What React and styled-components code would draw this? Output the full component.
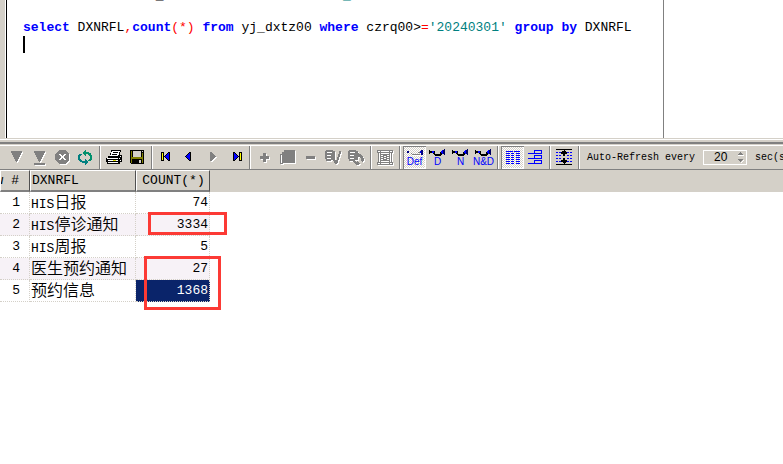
import React from 'react'
import styled, { createGlobalStyle, css } from 'styled-components'

const colors = {
	face: '#d4d0c8',
	shadow: '#808080',
	light: '#ffffff',
	keyword: '#0000ff',
	symbol: '#ff0000',
	string: '#008080',
	selected: '#0a246a',
	altRow: '#f7f2f7',
	mark: '#fc3a35',
}

const rows = [
	{ latin: 'HIS', name: '日报', count: 74 },
	{ latin: 'HIS', name: '停诊通知', count: 3334 },
	{ latin: 'HIS', name: '周报', count: 5 },
	{ latin: '', name: '医生预约通知', count: 27 },
	{ latin: '', name: '预约信息', count: 1368, selected: true },
]

// disabled icons are embossed: a white copy sits one pixel down and right
const Embossed = ({ children }) => (
	<>
		<g transform='translate(1 1)' fill='#fff'>
			{children}
		</g>
		<g fill='#808080'>{children}</g>
	</>
)

const Database = () => (
	<path
		fillRule='evenodd'
		d='M4 4h7v1h2v9H9v1H4v-2H3V5h1zM5 6v1h5V6zM5 9v1h4V9zM5 12v1h4v-1z'
	/>
)

const icons = {
	fetchNext: (
		<Embossed>
			<path d='M6 5h11v2h-1v2h-1v2h-1v2h-1v2h-1v1h-1v-1h-1v-2H9v-2H8V9H7V7H6z' />
		</Embossed>
	),
	fetchAll: (
		<Embossed>
			<path d='M6 5h11v2h-1v2h-1v2h-1v2h-1v2h-1v1h-1v-1h-1v-2H9v-2H8V9H7V7H6zM6 17h11v2H6z' />
		</Embossed>
	),
	cancel: (
		<>
			<path d='M9 5h6l4 4v6l-4 4H9l-4-4V9z' fill='#fff' />
			<path d='M8 4h6l4 4v6l-4 4H8l-4-4V8z' fill='#808080' />
			<path d='M8 8h2v1h1v1h1V9h1V8h2v1h-1v1h-1v2h1v1h1v1h-2v-1h-1v-1h-1v1h-1v1H8v-1h1v-1h1v-2H9V9H8z' fill='#fff' />
		</>
	),
	refresh: (
		<>
			<path d='M11 4h1v2h3v1h2v2h1v5h-1v1h-3v-1h1v-1h1v-3h-1V9h-1V8h-2v2h-1V9h-1V8H9V6h1V5h1z' fill='#00906c' />
			<path d='M12 19h-1v-2H8v-1H6v-1H5v-1H4V9h1V8h3v1H7v1H6v3h1v1h1v1h3v-2h1v1h1v1h1v2h-1v1h-1z' fill='#008080' />
		</>
	),
	print: (
		<>
			<path d='M8 4h10v2h-1v3h2v7h-2v2H4v-2H3v-4h2v-2h2V7h1z' fill='#000' />
			<path d='M9 5h8l-2 5H7z' fill='#fff' />
			<path d='M10 6h5v1h-5zM9 8h5v1H9z' fill='#000' />
			<path d='M4 12h11v1H4zM5 14h10v1H5zM5 16h10v1H5zM17 10h1v1h-1zM16 12h1v1h-1zM17 14h1v1h-1z' fill='#fff' />
			<path d='M10 14h3v1h-3z' fill='#e0e000' />
		</>
	),
	save: (
		<>
			<path d='M4 4h14v14H5v-1H4z' fill='#000' />
			<path d='M5 5h1v6h1v1h8v-1h1V7h1v10h-1v-5H6v5H5zM6 11h10v2H6z' fill='#808000' />
			<path d='M7 5h8v6H7zM16 5h1v1h-1zM13 14h2v3h-2z' fill='#d4d0c8' />
		</>
	),
	first: (
		<>
			<path d='M6 6h3v9H6zM9 10h1V9h1V8h1V7h1V6h2v9h-2v-1h-1v-1h-1v-1h-1v-1H9z' fill='#000' />
			<path d='M7 7h1v7H7z' fill='#ff0' />
			<path d='M10 10h1V9h1V8h1V7h1v7h-1v-1h-1v-1h-1v-1h-1z' fill='#00f' />
		</>
	),
	previous: (
		<>
			<path d='M7 10h1V9h1V8h1V7h1V6h2v9h-2v-1h-1v-1H9v-1H8v-1H7z' fill='#000' />
			<path d='M8 10h1V9h1V8h1V7h1v7h-1v-1h-1v-1H9v-1H8z' fill='#00f' />
		</>
	),
	next: (
		<Embossed>
			<path d='M9 6h2v1h1v1h1v1h1v1h1v1h-1v1h-1v1h-1v1h-1v1H9z' />
		</Embossed>
	),
	last: (
		<>
			<path d='M15 6h3v9h-3zM9 6h2v1h1v1h1v1h1v1h1v1h-1v1h-1v1h-1v1h-1v1H9z' fill='#000' />
			<path d='M16 7h1v7h-1z' fill='#ff0' />
			<path d='M10 7h1v1h1v1h1v1h1v1h-1v1h-1v1h-1v1h-1z' fill='#00f' />
		</>
	),
	insert: (
		<Embossed>
			<path d='M10 7h3v3h3v3h-3v3h-3v-3H7v-3h3z' />
		</Embossed>
	),
	copy: (
		<Embossed>
			<path fillRule='evenodd' d='M8 4h11v13H7v1H4V8h2V6h2zM5 9v8h1V9z' />
		</Embossed>
	),
	remove: (
		<Embossed>
			<path d='M7 10h9v3H7z' />
		</Embossed>
	),
	post: (
		<Embossed>
			<Database />
			<path d='M17 5h2v3h-1v3h-1v3h-1v3h-1v1h-2v-1h-1v-2h-1v-3h2v2h2v-3h1V8h1z' />
		</Embossed>
	),
	revert: (
		<Embossed>
			<Database />
			<path d='M12 7h2v1h2v1h1v1h1v2h1v3h-1v1h-1v-1h-1v-3h-1v-1h-2v2h-1v-1h-1v-1h-1V9h1V8h1zM8 13h2v2h1v1h1v-1h1v1h1v1h1v1h-1v1h-3v-1h-1v-1H9v-1H8z' />
		</Embossed>
	),
	clear: (
		<Embossed>
			<path
				fillRule='evenodd'
				d='M3 4h16v3h-1v9h1v3H3v-3h1V7H3zM4 5v1h2V5zM7 5v1h8V5zM16 5v1h2V5zM5 7v9h1V7zM16 7v9h1V7zM7 7v1h8V7zM7 9v1h2V9zM13 9v1h2V9zM10 10v1h2v-1zM7 11v1h2v-1zM13 11v1h2v-1zM10 12v1h2v-1zM7 13v1h2v-1zM13 13v1h2v-1zM7 15v1h8v-1zM4 17v1h2v-1zM7 17v1h8v-1zM16 17v1h2v-1z'
			/>
		</Embossed>
	),
	linkDefault: (
		<>
			<path d='M9 8h8v1H9zM8 7h1v1H8zM15 6h2v1h-2z' fill='#808080' />
			<path d='M9 9h8v1H9z' fill='#fff' />
			<path d='M4 5h2v2H4zM17 5h1V4h2v5h-2V7h-1z' fill='#000080' />
			<path d='M17 5h1v2h-1z' fill='#00f' />
		</>
	),
	link: (
		<>
			<path d='M3 4h1v1h2v2H4v1H3zM7 5h2v3h5V6h2v3h-1v1H9V9H8V8H7z' fill='#000' />
			<path d='M6 5h2v2H6zM15 5h1V4h1v4h-1V7h-1z' fill='#00f' />
			<path d='M17 4h1V3h1v6h-1V8h-1z' fill='#000060' />
		</>
	),
	gridView: (
		<path
			d='M5 5h7v1H5zM13 5h6v1h-6zM5 7h4v1H5zM10 7h3v1h-3zM15 7h4v1h-4zM5 9h4v1H5zM10 9h3v1h-3zM15 9h4v1h-4zM5 11h4v1H5zM10 11h3v1h-3zM15 11h4v1h-4zM5 13h4v1H5zM10 13h3v1h-3zM15 13h4v1h-4zM5 15h4v1H5zM10 15h3v1h-3zM15 15h4v1h-4zM5 17h4v1H5zM10 17h3v1h-3zM15 17h4v1h-4z'
			fill='#00f'
		/>
	),
	formView: (
		<path
			fillRule='evenodd'
			d='M10 4h8v4h-8zM11 5v2h6V5zM10 9h8v4h-8zM11 10v2h6v-2zM10 14h8v4h-8zM11 15v2h6v-2zM4 7h6v1H4zM4 12h6v1H4zM4 17h6v1H4z'
			fill='#00f'
		/>
	),
	rowHeight: (
		<>
			<path d='M3 3h16v1H3zM3 18h16v1H3z' fill='#000' />
			<path
				d='M3 6h2v1H3zM6 6h2v1H6zM14 6h2v1h-2zM17 6h2v1h-2zM3 9h2v1H3zM6 9h2v1H6zM14 9h2v1h-2zM17 9h2v1h-2zM3 12h2v1H3zM6 12h2v1H6zM14 12h2v1h-2zM17 12h2v1h-2zM3 15h2v1H3zM6 15h2v1H6zM14 15h2v1h-2zM17 15h2v1h-2z'
				fill='#00f'
			/>
			<path d='M11 4h1v1h1v1h1v2h-2v2h-2V8H8V6h1V5h2zM10 12h2v2h2v2h-1v1h-1v1h-1v-1h-1v-1H8v-2h2z' fill='#000' />
		</>
	),
}

const groups = [
	[
		{ icon: 'fetchNext', label: 'Fetch next rows', disabled: true },
		{ icon: 'fetchAll', label: 'Fetch all rows', disabled: true },
		{ icon: 'cancel', label: 'Cancel query', disabled: true },
		{ icon: 'refresh', label: 'Refresh' },
	],
	[
		{ icon: 'print', label: 'Print' },
		{ icon: 'save', label: 'Save' },
	],
	[
		{ icon: 'first', label: 'First record' },
		{ icon: 'previous', label: 'Previous record' },
		{ icon: 'next', label: 'Next record', disabled: true },
		{ icon: 'last', label: 'Last record' },
	],
	[
		{ icon: 'insert', label: 'Insert record', disabled: true },
		{ icon: 'copy', label: 'Copy record', disabled: true },
		{ icon: 'remove', label: 'Delete record', disabled: true },
		{ icon: 'post', label: 'Post edit', disabled: true },
		{ icon: 'revert', label: 'Revert edit', disabled: true },
	],
	[{ icon: 'clear', label: 'Clear grid', disabled: true }],
	[
		{ icon: 'linkDefault', text: 'Def', pressed: true },
		{ icon: 'link', text: 'D' },
		{ icon: 'link', text: 'N' },
		{ icon: 'link', text: 'N&D' },
	],
	[
		{ icon: 'gridView', label: 'Grid view', pressed: true },
		{ icon: 'formView', label: 'Form view' },
	],
	[{ icon: 'rowHeight', label: 'Row height' }],
]

const Tool = ({ icon, label, text, pressed, disabled }) => (
	<ToolButton type='button' aria-label={label} aria-pressed={pressed} disabled={disabled} $pressed={pressed}>
		<ToolIcon viewBox='0 0 23 23' aria-hidden='true'>
			{icons[icon]}
		</ToolIcon>
		{text && <ToolText>{text}</ToolText>}
	</ToolButton>
)

const Editor = () => (
	<EditorPane>
		<Gutter />
		<Code>
			<ScrolledLine>
				{' '.repeat(17)}_{' '.repeat(23)}
				<Str>_</Str>
			</ScrolledLine>
			<Keyword>select</Keyword> DXNRFL<Sym>,</Sym>
			<Keyword>count</Keyword>
			<Sym>(*)</Sym> <Keyword>from</Keyword> yj_dxtz00 <Keyword>where</Keyword> czrq00&gt;<Sym>=</Sym>
			<Str>'20240301'</Str> <Keyword>group by</Keyword> DXNRFL{'\n'}
			<Caret />
		</Code>
	</EditorPane>
)

const Toolbar = () => (
	<ToolbarRow>
		{groups.map((group, i) => (
			<React.Fragment key={i}>
				{group.map((tool) => (
					<Tool key={tool.label || tool.text} {...tool} />
				))}
				<Separator />
			</React.Fragment>
		))}
		<Refresh>
			<label htmlFor='refresh'>Auto-Refresh every</label>
			<Spin>
				<input id='refresh' type='text' inputMode='numeric' defaultValue='20' />
				<SpinButtons>
					<button type='button' aria-label='Increase'>
						<svg viewBox='0 0 7 4' shapeRendering='crispEdges'>
							<path d='M3 0h1v1h1v1h1v1H1V2h1V1h1z' fill='#808080' />
							<path d='M1 3h6v1H1z' fill='#fff' />
						</svg>
					</button>
					<button type='button' aria-label='Decrease'>
						<svg viewBox='0 0 7 4' shapeRendering='crispEdges'>
							<path d='M6 1h1v1H6v1H5v1H4V3h1V2h1z' fill='#fff' />
							<path d='M1 0h5v1H5v1H4v1H3V2H2V1H1z' fill='#808080' />
						</svg>
					</button>
				</SpinButtons>
			</Spin>
			<span>sec(s)</span>
		</Refresh>
	</ToolbarRow>
)

const Results = () => (
	<GridArea>
		<Grid>
			<colgroup>
				<col width='30' />
				<col width='106' />
				<col width='74' />
				<col />
			</colgroup>
			<thead>
				<tr>
					<HeadCell>
						<RowHead>w #</RowHead>
					</HeadCell>
					<HeadCell>DXNRFL</HeadCell>
					<HeadCell $center>COUNT(*)</HeadCell>
					<HeadFill />
				</tr>
			</thead>
			<tbody>
				{rows.map((row, i) => (
					<Row key={row.latin + row.name}>
						<NumberCell $wide>{i + 1}</NumberCell>
						<Cell>
							{row.latin}
							<Han>{row.name}</Han>
						</Cell>
						<NumberCell $selected={row.selected}>{row.count}</NumberCell>
						<td />
					</Row>
				))}
			</tbody>
		</Grid>
		<Mark $left={148} $top={42} $width={79} $height={23} />
		<Mark $left={144} $top={86} $width={77} $height={54} />
	</GridArea>
)

const App = () => (
	<Page>
		<GlobalStyle />
		<Editor />
		<Splitter />
		<Toolbar />
		<Results />
	</Page>
)

const mono = "'Liberation Mono', 'Noto Sans CJK SC', monospace"

const GlobalStyle = createGlobalStyle`
	* {
		box-sizing: border-box;
	}

	body {
		margin: 0;
		background: ${colors.light};
		color: #000;
		font: 13px/17px ${mono};
	}

	button,
	input {
		margin: 0;
		padding: 0;
		border: none;
		border-radius: 0;
		background: none;
	}
`

const Page = styled.div`
	display: flex;
	flex-direction: column;
	min-height: 100vh;
	overflow: hidden;
`

const EditorPane = styled.div`
	display: flex;
	min-height: 138px;
	overflow: hidden;
`

const Gutter = styled.div`
	flex: none;
	width: 7px;
	border-right: 1px solid #000;
	background: linear-gradient(to right, ${colors.face} 5px, ${colors.light} 5px);
`

const Code = styled.pre`
	margin: 0;
	padding-left: 16px;
	flex: 0 0 657px;
	border-right: 1px solid ${colors.shadow};
	font: inherit;
`

const ScrolledLine = styled.span`
	display: block;
	margin: -13px 0 15px;
`

const Keyword = styled.span`
	color: ${colors.keyword};
	font-weight: bold;
`

const Sym = styled.span`
	color: ${colors.symbol};
`

const Str = styled.span`
	color: ${colors.string};
`

const Caret = styled.span`
	display: inline-block;
	width: 2px;
	height: 17px;
	background: #000;
	vertical-align: top;
`

const Splitter = styled.div`
	height: 8px;
	border-top: 1px solid ${colors.face};
	background: linear-gradient(
		${colors.light} 1px,
		${colors.face} 1px 3px,
		${colors.shadow} 3px 5px,
		${colors.face} 5px 6px,
		${colors.light} 6px
	);
`

const ToolbarRow = styled.div`
	display: flex;
	align-items: stretch;
	height: 24px;
	padding-left: 5px;
	border-bottom: 1px solid ${colors.shadow};
	background: ${colors.face};
	overflow: hidden;
`

const ToolButton = styled.button`
	position: relative;
	flex: none;
	width: 23px;
	height: 23px;

	${({ $pressed }) =>
		$pressed &&
		css`
			background: repeating-conic-gradient(${colors.face} 0 25%, ${colors.light} 0 50%) 0 0 / 2px 2px;
			box-shadow: inset 1px 1px ${colors.shadow}, inset -1px -1px ${colors.light};
		`}
`

const ToolIcon = styled.svg`
	display: block;
	width: 23px;
	height: 23px;
	shape-rendering: crispEdges;
`

const ToolText = styled.span`
	position: absolute;
	inset: auto 0 1px;
	display: flex;
	justify-content: center;
	color: ${colors.keyword};
	font: 10px/12px 'Liberation Sans', sans-serif;
`

const Separator = styled.div`
	flex: none;
	width: 2px;
	margin: 0 2px;
	border-left: 1px solid ${colors.shadow};
	border-right: 1px solid ${colors.light};
`

const Refresh = styled.div`
	display: flex;
	flex: none;
	align-items: center;
	gap: 8px;
	padding-left: 5px;
	font-size: 10px;
	white-space: nowrap;
`

const Spin = styled.div`
	display: flex;
	width: 44px;
	height: 15px;
	border: 1px solid ${colors.light};

	input {
		width: 33px;
		padding-left: 10px;
		font: 12px/13px 'Liberation Sans', sans-serif;
	}
`

const SpinButtons = styled.div`
	display: flex;
	flex-direction: column;
	justify-content: space-between;
	padding: 1px 0;

	button,
	svg {
		display: block;
		width: 7px;
		height: 4px;
	}
`

const GridArea = styled.div`
	position: relative;
`

const Grid = styled.table`
	width: 100%;
	border-collapse: separate;
	border-spacing: 0;
	table-layout: fixed;
`

const HeadCell = styled.th`
	height: 22px;
	padding: 0 0 0 1px;
	border: solid;
	border-width: 1px 1px 2px;
	border-color: ${colors.light} #505050 ${colors.shadow} ${colors.light};
	background: ${colors.face};
	font-weight: normal;
	text-align: ${({ $center }) => ($center ? 'center' : 'left')};
	overflow: hidden;
`

const RowHead = styled.div`
	display: flex;
	justify-content: flex-end;
	padding-right: 10px;
	white-space: nowrap;
`

const HeadFill = styled.th`
	padding: 0;
	background: ${colors.face};
`

const Cell = styled.td`
	height: 22px;
	padding: 0 0 0 1px;
	border: dotted ${colors.face};
	border-width: 0 1px 1px 0;
	line-height: 16px;
	white-space: nowrap;
`

const NumberCell = styled(Cell)`
	padding-right: ${({ $wide }) => ($wide ? 9 : 1)}px;
	text-align: right;

	${({ $selected }) =>
		$selected &&
		css`
			background: ${colors.selected};
			color: ${colors.light};
		`}
`

const Row = styled.tr`
	&:nth-child(even) ${Cell}, &:nth-child(even) ${NumberCell} {
		background: ${colors.altRow};
	}
`

const Han = styled.span`
	font: 350 16px/16px 'Noto Sans CJK SC', sans-serif;
`

const Mark = styled.div`
	position: absolute;
	left: ${({ $left }) => $left}px;
	top: ${({ $top }) => $top}px;
	width: ${({ $width }) => $width}px;
	height: ${({ $height }) => $height}px;
	border: 3px solid ${colors.mark};
	pointer-events: none;
`

export default App
